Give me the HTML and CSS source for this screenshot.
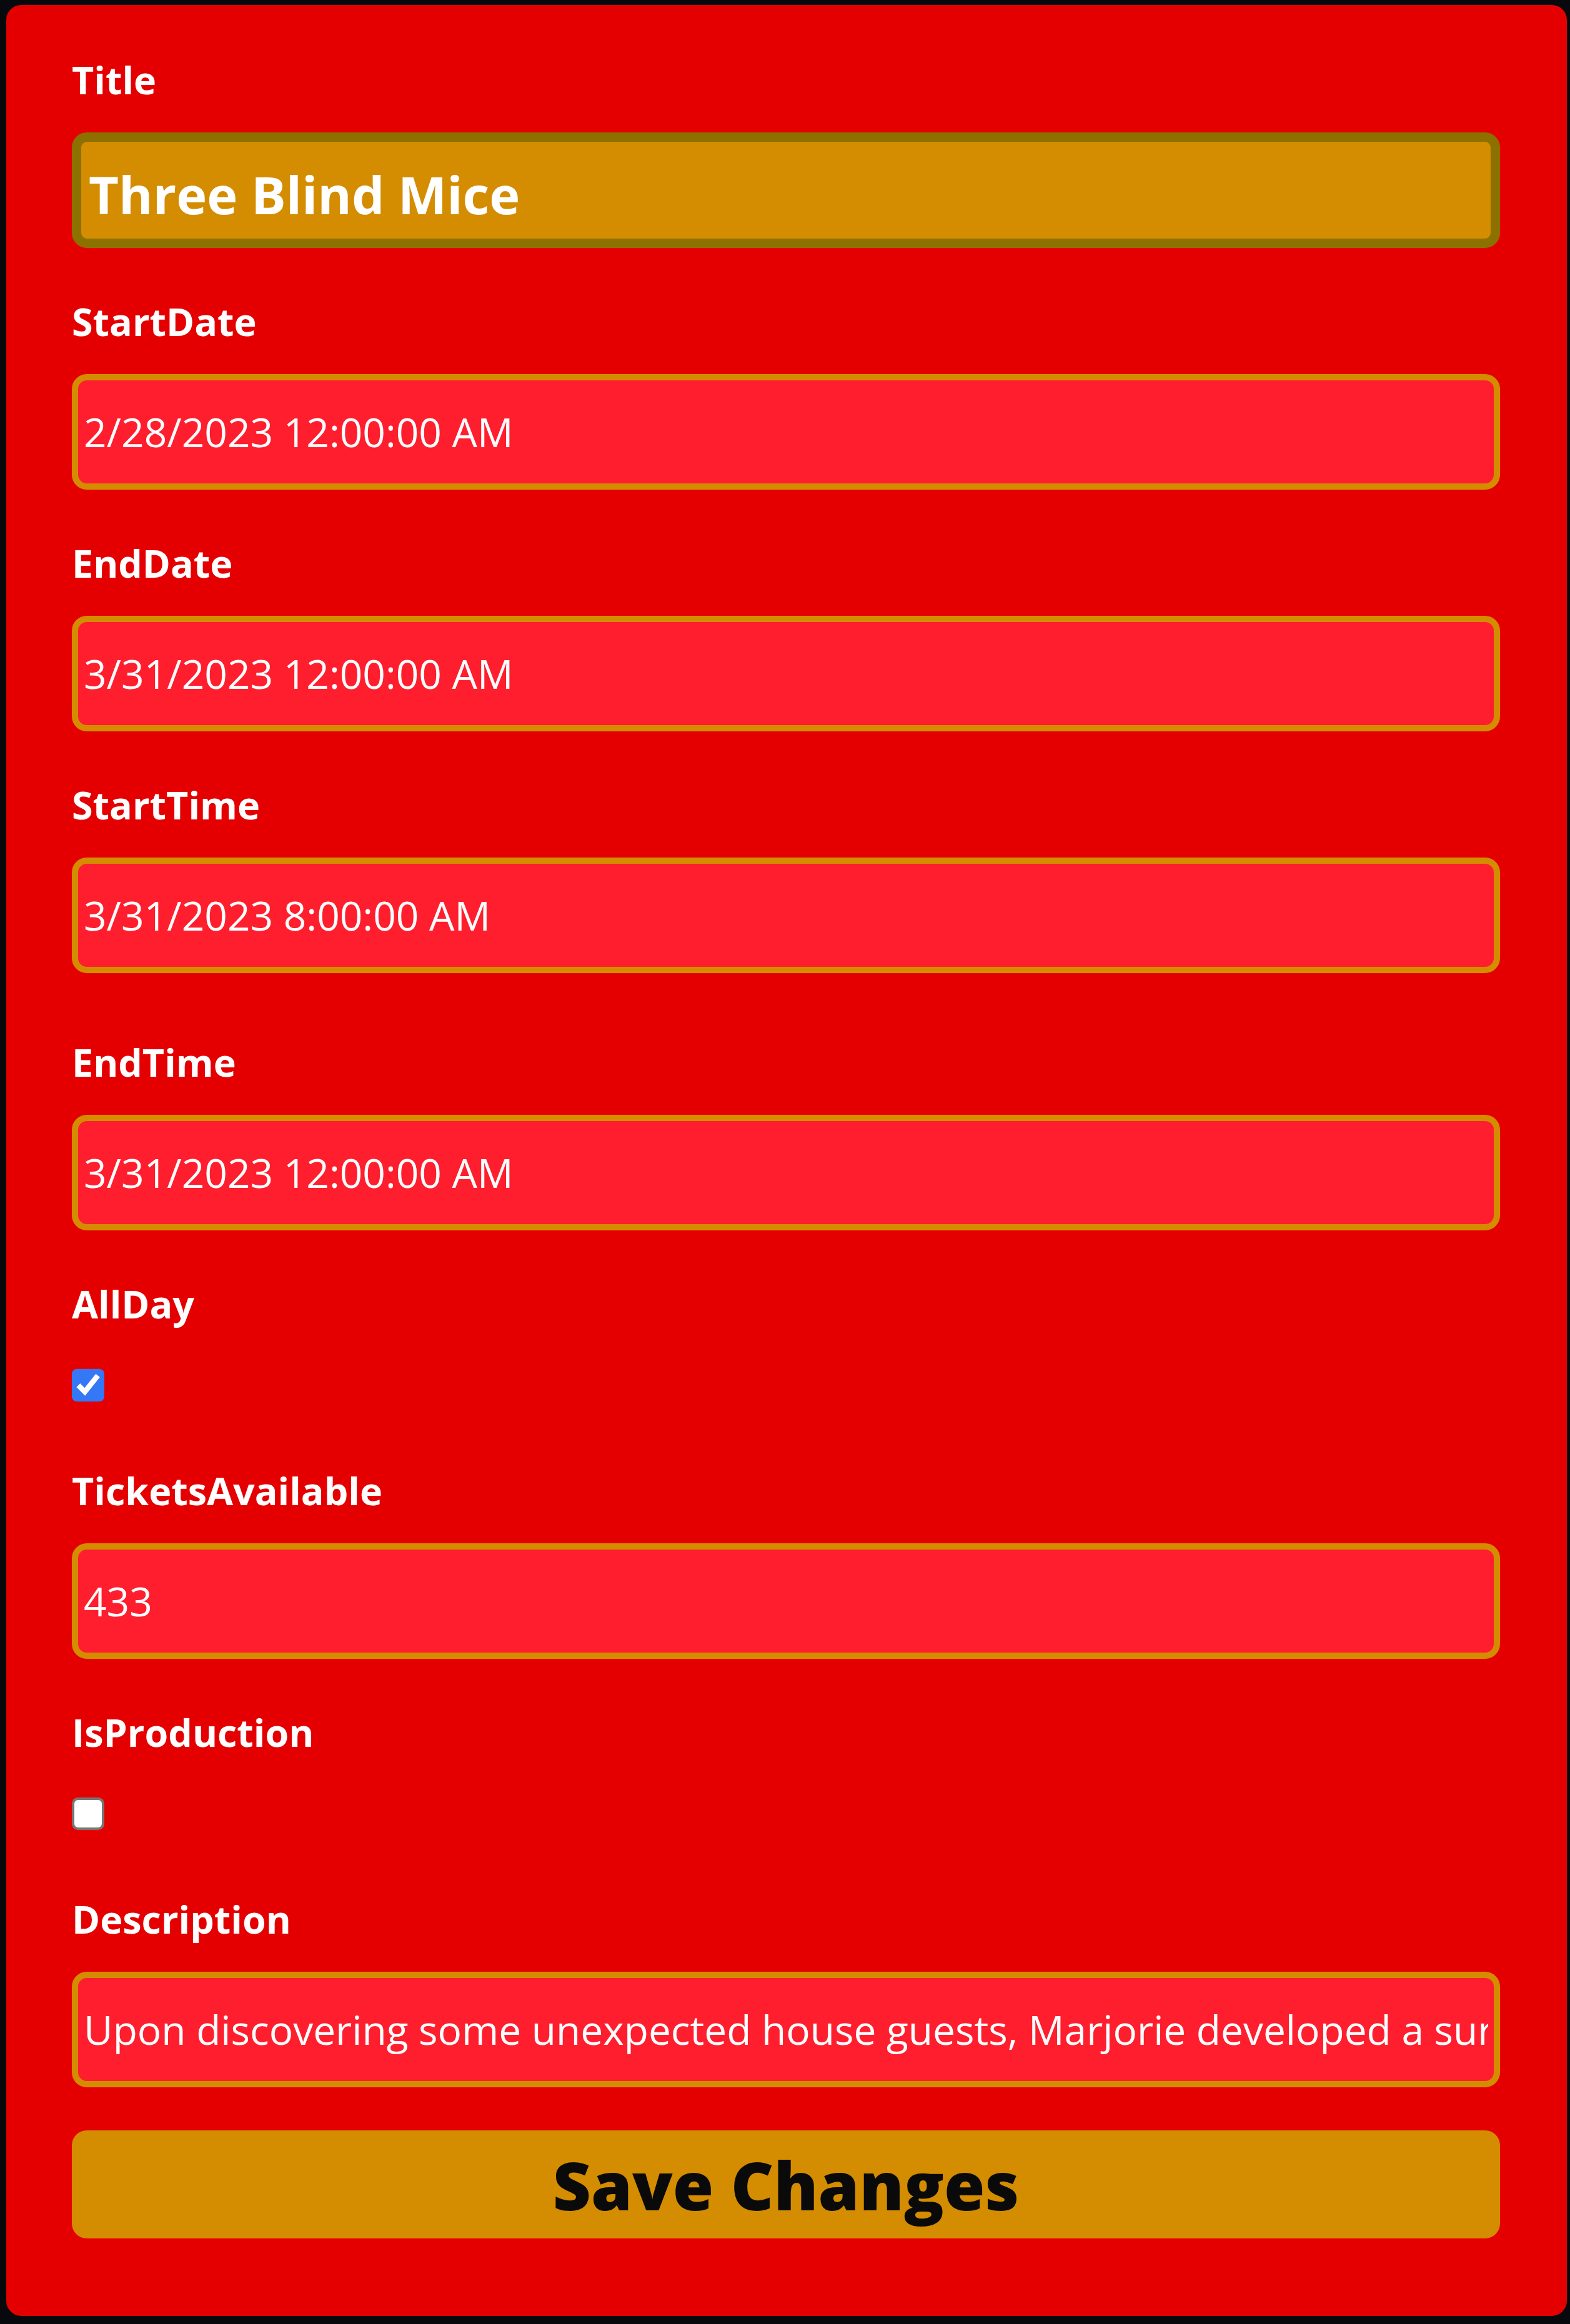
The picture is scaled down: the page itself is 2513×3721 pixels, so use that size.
FILE: index.html
```html
<!DOCTYPE html>
<html lang="en">
<head>
<meta charset="utf-8">
<title>Edit Event</title>
<link rel="stylesheet" href="styles.css">
</head>
<body>
<div class="card">
  <form class="form">
    <div class="field">
      <label class="field-label" for="title">Title</label>
      <input class="field-input field-input--title" id="title" type="text" value="Three Blind Mice">
    </div>
    <div class="field">
      <label class="field-label" for="startdate">StartDate</label>
      <input class="field-input" id="startdate" type="text" value="2/28/2023 12:00:00 AM">
    </div>
    <div class="field">
      <label class="field-label" for="enddate">EndDate</label>
      <input class="field-input" id="enddate" type="text" value="3/31/2023 12:00:00 AM">
    </div>
    <div class="field">
      <label class="field-label" for="starttime">StartTime</label>
      <input class="field-input" id="starttime" type="text" value="3/31/2023 8:00:00 AM">
    </div>
    <div class="field field--spaced">
      <label class="field-label" for="endtime">EndTime</label>
      <input class="field-input" id="endtime" type="text" value="3/31/2023 12:00:00 AM">
    </div>
    <div class="field field--check">
      <label class="field-label" for="allday">AllDay</label>
      <input class="field-check" id="allday" type="checkbox" checked>
    </div>
    <div class="field">
      <label class="field-label" for="tickets">TicketsAvailable</label>
      <input class="field-input" id="tickets" type="text" value="433">
    </div>
    <div class="field field--check">
      <label class="field-label" for="isproduction">IsProduction</label>
      <input class="field-check" id="isproduction" type="checkbox">
    </div>
    <div class="field field--last">
      <label class="field-label" for="description">Description</label>
      <input class="field-input" id="description" type="text" value="Upon discovering some unexpected house guests, Marjorie developed a sure-fire plan to rid her home of the three blind mice.">
    </div>
    <button class="save-button" type="button">Save Changes</button>
  </form>
</div>
</body>
</html>
```

FILE: styles.css
```css
html, body {
  margin: 0;
  background: #07090c;
}

body {
  padding: 8px 5px 13px 10px;
  font-family: "Open Sans", "Noto Sans", "DejaVu Sans", sans-serif;
}

.card {
  background: #e40000;
  border-radius: 24px;
  padding: 82px 107px 124px 105px;
}

.form {
  display: flex;
  flex-direction: column;
}

.field {
  display: flex;
  flex-direction: column;
  gap: 46px;
  margin-bottom: 80px;
}

.field--spaced {
  margin-top: 25px;
}

.field--check {
  gap: 66px;
  margin-bottom: 105px;
}

.field--last {
  margin-bottom: 69px;
}

.field-label {
  display: block;
  color: #ffffff;
  font-family: "Open Sans", "Noto Sans", sans-serif;
  font-weight: 700;
  font-size: 61px;
  line-height: 76px;
}

.field-input {
  box-sizing: border-box;
  width: 100%;
  height: 185px;
  margin: 0;
  padding: 0 9px;
  background: #ff1e2d;
  border: 10px solid #d48c00;
  border-radius: 24px;
  color: #ffffff;
  font-family: "Open Sans", "Noto Sans", sans-serif;
  font-size: 64px;
  font-weight: 400;
  outline: none;
}

.field-input--title {
  background: #d48c00;
  border: 15px solid #8c7000;
  padding: 12px 12px 0 12px;
  font-size: 83px;
  font-weight: 700;
}

.field-check {
  align-self: flex-start;
  margin: 0;
  zoom: 4;
  accent-color: #3478f6;
}

.save-button {
  box-sizing: border-box;
  width: 100%;
  height: 173px;
  margin: 0;
  padding: 0;
  background: #d48c00;
  border: none;
  border-radius: 24px;
  color: #0a0a0a;
  font-family: "Open Sans", "Noto Sans", sans-serif;
  font-size: 106px;
  font-weight: 800;
  line-height: 1;
}
```
